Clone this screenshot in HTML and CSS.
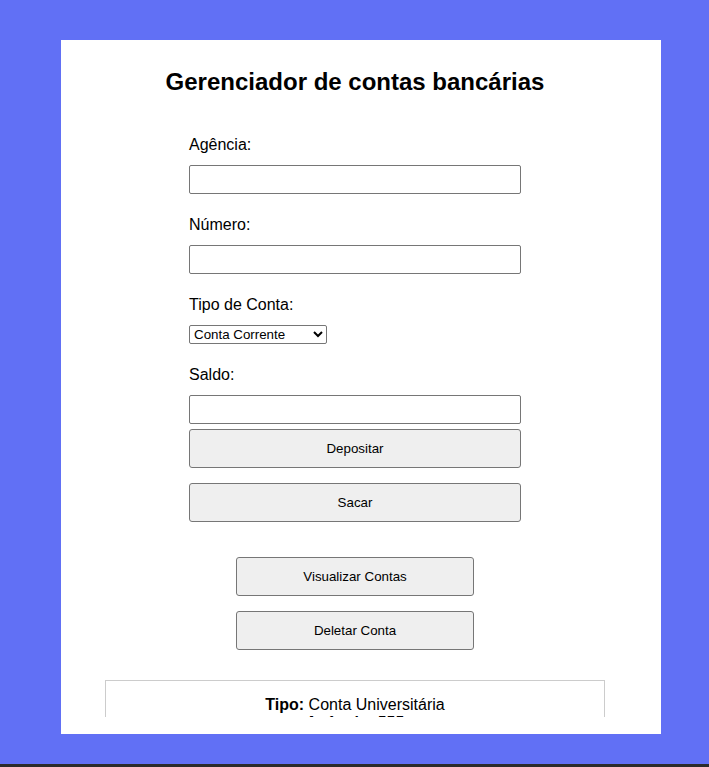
FILE: index.html
```html
<!DOCTYPE html>
<html lang="pt-BR">
<head>
<meta charset="utf-8">
<title>Gerenciador de contas bancárias</title>
<link rel="stylesheet" href="styles.css">
</head>
<body>
<div class="page">
  <div class="container">
    <div class="scroll">
      <h1 class="title">Gerenciador de contas bancárias</h1>
      <form class="form">
        <div class="field">
          <label class="label" for="agencia">Agência:</label>
          <input class="input" id="agencia" type="text">
        </div>
        <div class="field">
          <label class="label" for="numero">Número:</label>
          <input class="input" id="numero" type="text">
        </div>
        <div class="field field-select">
          <label class="label" for="tipo">Tipo de Conta:</label>
          <select class="select" id="tipo">
            <option>Conta Corrente</option>
            <option>Conta Poupança</option>
            <option>Conta Universitária</option>
          </select>
        </div>
        <div class="field field-last">
          <label class="label" for="saldo">Saldo:</label>
          <input class="input" id="saldo" type="text">
        </div>
        <button type="button" class="btn btn-wide btn-first">Depositar</button>
        <button type="button" class="btn btn-wide btn-next">Sacar</button>
      </form>
      <div class="actions">
        <button type="button" class="btn btn-mid">Visualizar Contas</button>
        <button type="button" class="btn btn-mid btn-next">Deletar Conta</button>
      </div>
      <div class="list">
        <p class="row"><strong>Tipo:</strong> Conta Universitária</p>
        <p class="row"><strong>Agência:</strong> 555</p>
        <p class="row"><strong>Número:</strong> 123</p>
        <p class="row"><strong>Saldo:</strong> 100</p>
      </div>
    </div>
  </div>
  <div class="bottom-bar"></div>
</div>
</body>
</html>
```
FILE: styles.css
```css
html, body {
  margin: 0;
  padding: 0;
}
body {
  background: #6170f5;
  font-family: "Liberation Sans", Arial, sans-serif;
  color: #000;
  height: 767px;
  overflow: hidden;
}
.page {
  display: flex;
  flex-direction: column;
  height: 767px;
}
.container {
  width: 600px;
  margin: 40px 0 0 61px;
  background: #fff;
  padding-bottom: 17px;
}
.scroll {
  height: 649px;
  overflow: hidden;
  padding: 28px 12px 0 0;
}
.title {
  margin: 0 0 40px;
  font-size: 24px;
  line-height: 28px;
  font-weight: bold;
  text-align: center;
}
.form {
  width: 332px;
  margin: 0 auto;
  display: flex;
  flex-direction: column;
}
.field {
  display: flex;
  flex-direction: column;
  align-items: flex-start;
  margin-bottom: 22px;
}
.field-last {
  margin-bottom: 0;
}
.label {
  font-size: 16px;
  line-height: 18px;
  margin-bottom: 11px;
}
.input {
  box-sizing: border-box;
  width: 332px;
  height: 29px;
  border: 1px solid #767676;
  border-radius: 2px;
  padding: 1px 2px;
  font-family: "Liberation Sans", Arial, sans-serif;
  font-size: 13.33px;
  margin: 0;
}
.select {
  box-sizing: border-box;
  width: 138px;
  height: 19px;
  font-family: "Liberation Sans", Arial, sans-serif;
  font-size: 13.33px;
  border: 1px solid #767676;
  border-radius: 2px;
  background: #fff;
  color: #000;
  margin: 0;
}
.btn {
  box-sizing: border-box;
  height: 39px;
  background: #efefef;
  border: 1px solid #767676;
  border-radius: 3px;
  font-family: "Liberation Sans", Arial, sans-serif;
  font-size: 13.33px;
  color: #000;
  margin: 0;
  padding: 0;
}
.btn-wide {
  width: 332px;
}
.btn-first {
  margin-top: 5px;
}
.btn-next {
  margin-top: 15px;
}
.actions {
  display: flex;
  flex-direction: column;
  align-items: center;
  margin-top: 35px;
}
.btn-mid {
  width: 238px;
}
.list {
  box-sizing: border-box;
  width: 500px;
  margin: 30px auto 0;
  border: 1px solid #ccc;
  padding: 15px 10px;
  text-align: center;
}
.row {
  margin: 0;
  font-size: 16px;
  line-height: 18px;
}
.bottom-bar {
  margin-top: auto;
  height: 3px;
  background: #2b2b2b;
}
```
